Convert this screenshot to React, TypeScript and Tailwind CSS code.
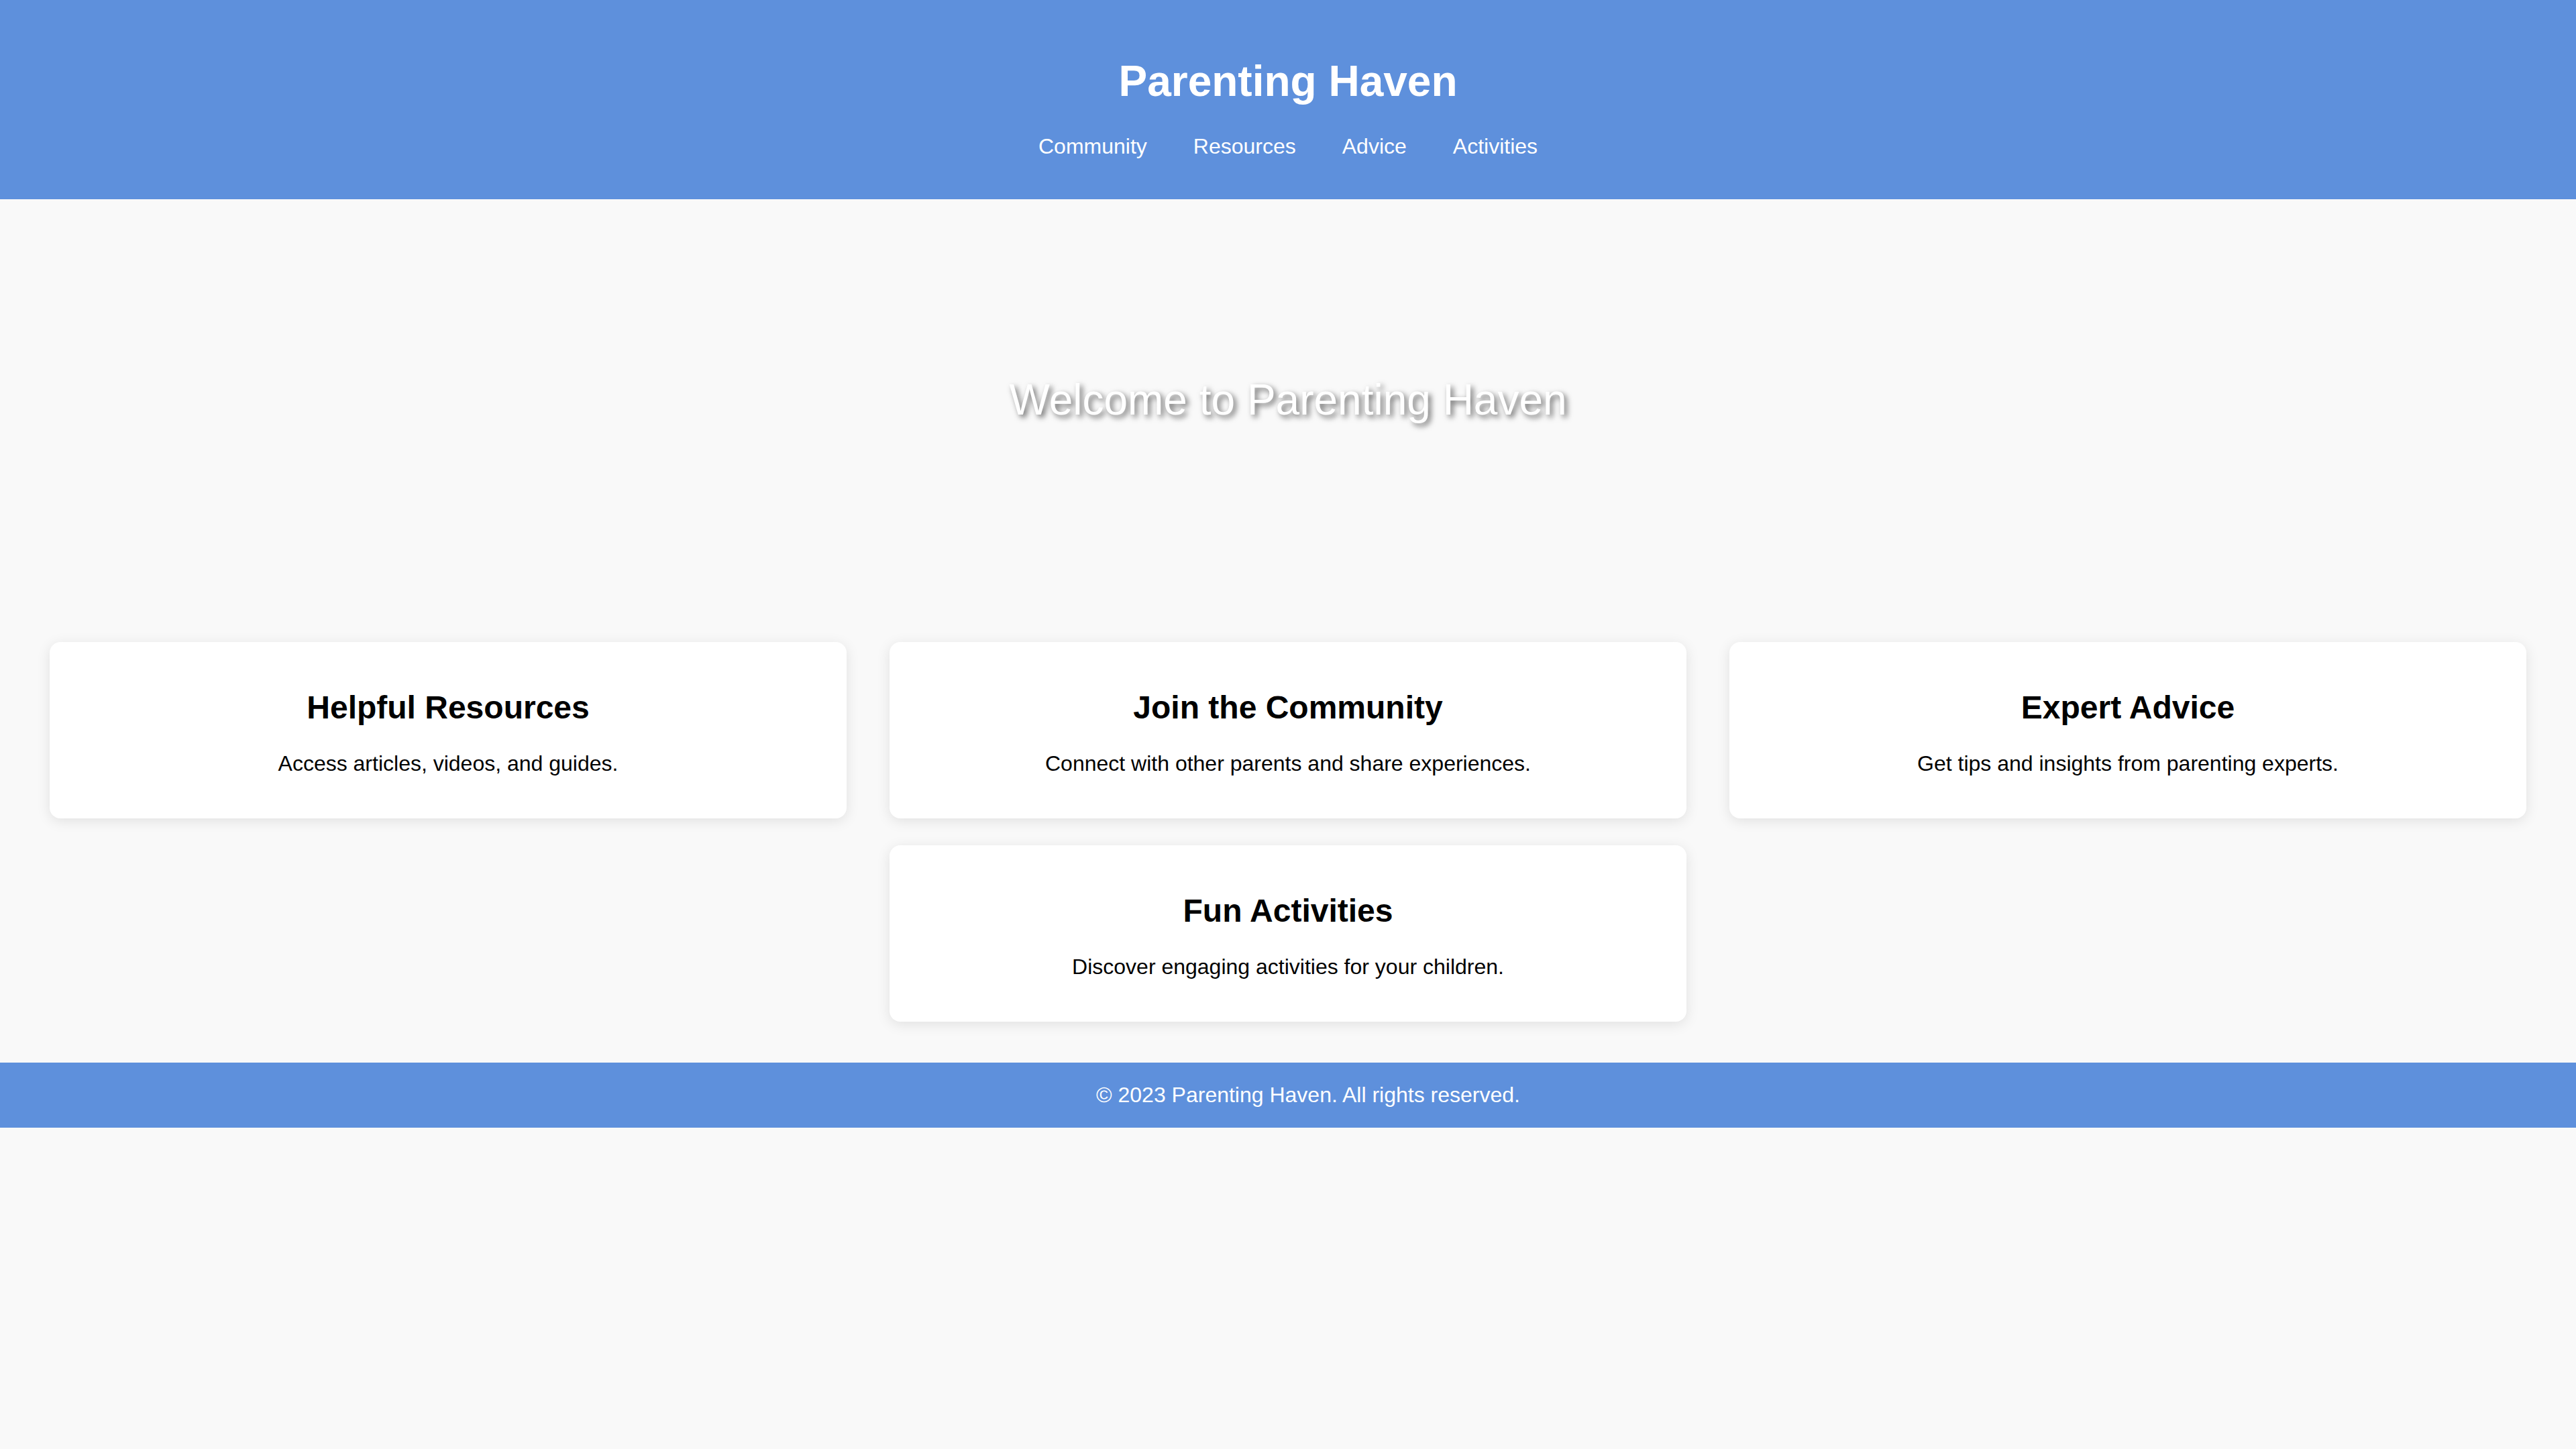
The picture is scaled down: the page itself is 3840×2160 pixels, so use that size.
import React from 'react';

const navLinks = ['Community', 'Resources', 'Advice', 'Activities'];

const features = [
  { title: 'Helpful Resources', text: 'Access articles, videos, and guides.' },
  { title: 'Join the Community', text: 'Connect with other parents and share experiences.' },
  { title: 'Expert Advice', text: 'Get tips and insights from parenting experts.' },
  { title: 'Fun Activities', text: 'Discover engaging activities for your children.' },
];

const FeatureCard: React.FC<{ title: string; text: string }> = ({ title, text }) => (
  <div className="w-[1188px] bg-white rounded-[16px] shadow-[0_4px_20px_rgba(0,0,0,0.1)] text-center pt-[70px] pb-[63px] px-[30px]">
    <h3 className="text-[48px] font-bold leading-[55px] text-black">{title}</h3>
    <p className="mt-[38px] text-[32px] leading-[37px] text-black">{text}</p>
  </div>
);

export default function App() {
  return (
    <div className="min-h-screen bg-[#f9f9f9] font-['Liberation_Sans',Arial,sans-serif]">
      {/* Header */}
      <header className="bg-[#5e90dc] text-white text-center pt-[84px] pb-[60px]">
        <h1 className="text-[64px] font-bold leading-[74px]">Parenting Haven</h1>
        <nav className="mt-[42px] flex justify-center gap-[69px]">
          {navLinks.map(link => (
            <a key={link} href="#" className="text-[32px] leading-[37px] text-white">
              {link}
            </a>
          ))}
        </nav>
      </header>

      {/* Hero */}
      <section className="py-[262px] text-center">
        <h2 className="text-[64px] font-normal leading-[74px] text-white [text-shadow:4px_4px_8px_rgba(0,0,0,0.6)]">
          Welcome to Parenting Haven
        </h2>
      </section>

      {/* Features */}
      <section className="pt-[62px] pb-[61px] px-[74px] flex flex-wrap justify-center gap-x-[64px] gap-y-[40px]">
        {features.map(f => (
          <FeatureCard key={f.title} title={f.title} text={f.text} />
        ))}
      </section>

      {/* Footer */}
      <footer className="bg-[#5e90dc] text-white text-center py-[30px] pl-[60px]">
        <p className="text-[32px] leading-[37px]">© 2023 Parenting Haven. All rights reserved.</p>
      </footer>
    </div>
  );
}
